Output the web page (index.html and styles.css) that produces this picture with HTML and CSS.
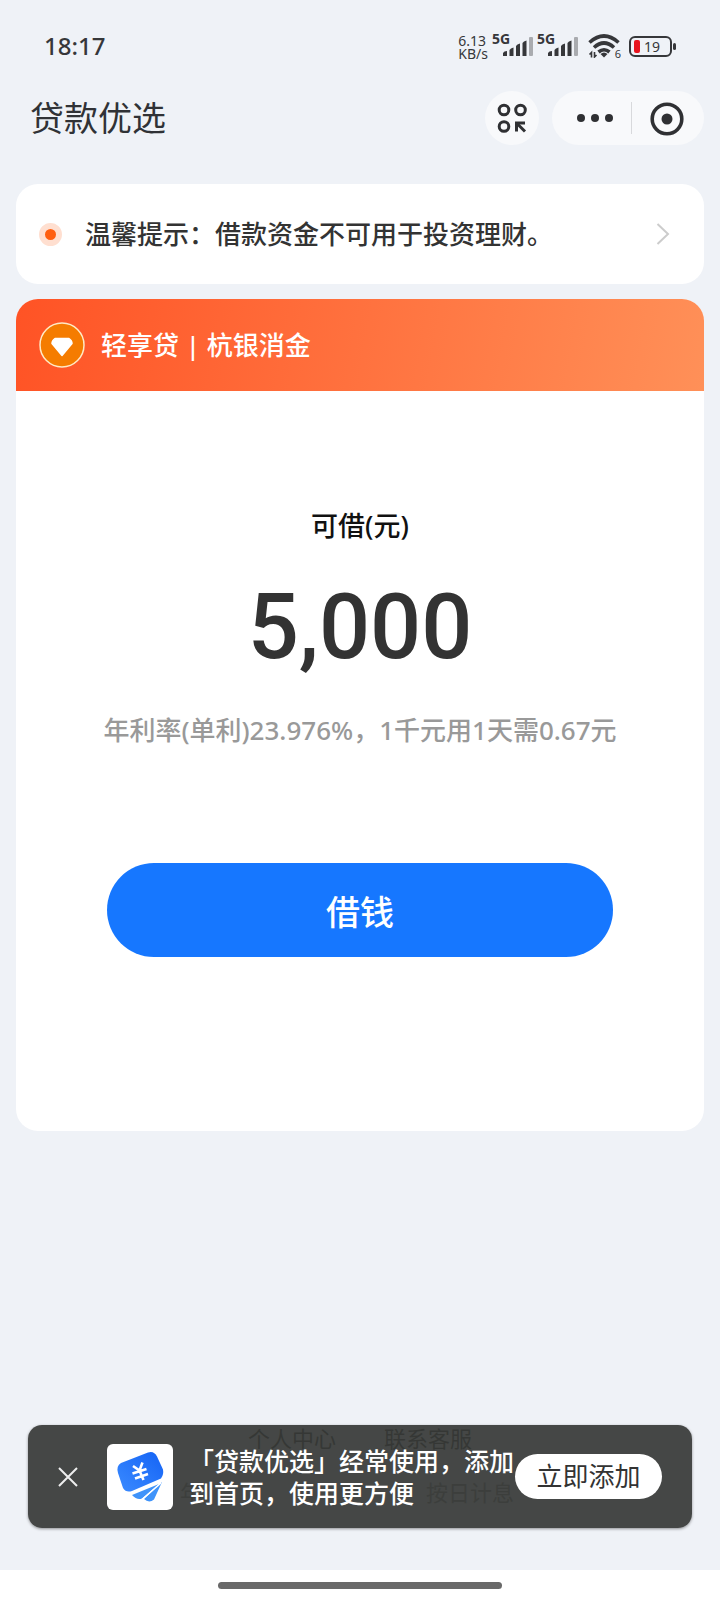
FILE: index.html
```html
<!DOCTYPE html>
<html lang="zh-CN">
<head>
<meta charset="utf-8">
<meta name="viewport" content="width=device-width, initial-scale=1">
<title>贷款优选</title>
<link rel="stylesheet" href="styles.css">
</head>
<body>
<div class="screen">
  <div class="status">
    <span class="time">18:17</span>
    <div class="indicators">
      <span class="speed"><span>6.13</span><span>KB/s</span></span>
      <span class="signal"><span class="net">5G</span>
        <svg class="bars" width="30" height="20" viewBox="0 0 30 20"><g fill="#36373a"><path d="M0 19v-3q1-2 4-2v5z"/><path d="M6.500 19v-6q1-2 4-2.500V19z"/><path d="M13 19V9q1-2 4-2.500V19z"/><path d="M19.500 19V6q1-2 4-2.500V19z"/></g><rect x="26" y="0" width="4" height="19" rx="1" fill="#a9abaf"/></svg>
      </span>
      <span class="signal"><span class="net">5G</span>
        <svg class="bars" width="30" height="20" viewBox="0 0 30 20"><g fill="#36373a"><path d="M0 19v-3q1-2 4-2v5z"/><path d="M6.500 19v-6q1-2 4-2.500V19z"/><path d="M13 19V9q1-2 4-2.500V19z"/><path d="M19.500 19V6q1-2 4-2.500V19z"/></g><rect x="26" y="0" width="4" height="19" rx="1" fill="#a9abaf"/></svg>
      </span>
      <span class="wifi">
        <svg width="32" height="24" viewBox="0 0 32 24" fill="none" stroke="#36373a" stroke-width="3.600"><path d="M1.500 8.500Q16-4.500 30.500 8.500M6 13.500Q16 4.500 26 13.500M10.500 18q5.500-4.500 11 0"/><path d="M12.500 20q3.500-3 7 0L16 23.500z" fill="#36373a" stroke="none"/><path d="M3.500 23.500v-5L1.500 20.500M6.500 18v5l2-2" stroke-width="1.600"/></svg>
        <span class="gen">6</span>
      </span>
      <span class="battery"><span class="level"></span>19</span>
    </div>
  </div>

  <header class="nav">
    <h1 class="title">贷款优选</h1>
    <button class="round" aria-label="更多服务">
      <svg width="30" height="30" viewBox="0 0 30 30" fill="none" stroke="#2f3033" stroke-width="3"><circle cx="7" cy="7" r="4.800"/><circle cx="23.500" cy="7" r="4.800"/><circle cx="7" cy="23.500" r="4.800"/><path d="M28 28.500 20 20.500"/><path d="M19.500 28.500V20H28" stroke-width="3"/></svg>
    </button>
    <div class="capsule">
      <button class="cap menu" aria-label="菜单"><svg width="36" height="8" viewBox="0 0 36 8" fill="#2f3033"><circle cx="4" cy="4" r="4"/><circle cx="18" cy="4" r="4"/><circle cx="32" cy="4" r="4"/></svg></button>
      <button class="cap" aria-label="关闭"><svg width="34" height="34" viewBox="0 0 34 34"><circle cx="17" cy="17" r="14.800" fill="none" stroke="#2f3033" stroke-width="3.600"/><circle cx="17" cy="17" r="5.500" fill="#2f3033"/></svg></button>
    </div>
  </header>

  <main class="content">
    <a class="notice" href="#">
      <span class="dot"></span>
      <span class="notice-text">温馨提示：借款资金不可用于投资理财。</span>
      <svg width="14" height="22" viewBox="0 0 14 22" fill="none" stroke="#ccc" stroke-width="2"><path d="M1.500 1 12 11 1.500 21"/></svg>
    </a>
    <section class="card">
      <div class="card-head">
        <svg width="46" height="46" viewBox="0 0 46 46"><circle cx="23" cy="23" r="22" fill="#f57c00" stroke="#ffe9c4" stroke-width="1.500"/><path d="M16 16.500h14q3 2 3 5L23 33.500 13 21.500q0-3 3-5z" fill="#fff" stroke="#fff" stroke-width="1.500" stroke-linejoin="round"/></svg>
        <h2 class="brand">轻享贷 | 杭银消金</h2>
      </div>
      <div class="card-body">
        <p class="label">可借(元)</p>
        <p class="amount">5,000</p>
        <p class="rate">年利率(单利)23.976%，1千元用1天需0.67元</p>
        <button class="borrow">借钱</button>
      </div>
    </section>
  </main>

  <footer class="footer">
    <div class="links"><a href="#">个人中心</a><a href="#">联系客服</a></div>
    <p class="legal"><span>年</span><span>按日计息</span></p>
  </footer>

  <aside class="toast">
    <button class="close" aria-label="关闭提示"><svg width="20" height="20" viewBox="0 0 20 20" fill="none" stroke="#eee" stroke-width="2"><path d="m1 1 18 18M19 1 1 19"/></svg></button>
    <svg class="app" width="66" height="66" viewBox="0 0 66 66">
      <defs><linearGradient id="blue" x1="0" y1="1" x2="1" y2="0"><stop offset="0" stop-color="#3b8bff"/><stop offset="1" stop-color="#1463f5"/></linearGradient></defs>
      <rect width="66" height="66" rx="6" fill="#fff"/>
      <path d="M14 19 41 8.500q6-2 9 4l6 13q1 5-2 9L25 47q-6 2-9-3l-5-15q-2-7 3-10z" fill="url(#blue)"/>
      <path d="m25 51 27-11-17 14.500q-5 2-10-3.500zM37 55l18-17-8 17.500q-5 4-10-.5z" fill="#3f93fa"/>
      <path d="M54 39 35 55.500" stroke="#fff" stroke-width="1.500"/>
      <path d="m26 22 6.500 4.500 3-8M32.500 26.500l4 9.500M25.500 29.500l14-4.500M28 34.500l13-4.500" fill="none" stroke="#fff" stroke-width="2.600"/>
    </svg>
    <p class="toast-text">「贷款优选」经常使用，添加到首页，使用更方便</p>
    <button class="add">立即添加</button>
  </aside>

  <div class="homebar"><span class="pill"></span></div>
</div>
</body>
</html>
```
FILE: styles.css
```css
* { box-sizing: border-box; }
body, h1, h2, p { margin: 0; }
body {
  background: #eff2f7;
  color: #333;
  font-family: "Noto Sans", "Noto Sans CJK SC", sans-serif;
}
button { border: 0; padding: 0; font: inherit; color: inherit; cursor: pointer; }
a { color: inherit; text-decoration: none; }
svg { display: block; flex: none; }
.screen { position: relative; min-height: 100vh; display: flex; flex-direction: column; }

.status { display: flex; justify-content: space-between; height: 76px; padding: 16px 48px 0 44px; }
.time { font-size: 24px; font-weight: 500; line-height: 60px; color: #36373a; }
.indicators { display: flex; align-items: flex-start; gap: 4px; padding-top: 16px; color: #36373a; }
.speed { display: flex; flex-direction: column; font-size: 14px; line-height: 13px; padding-top: 2px; }
.signal { display: flex; width: 41px; position: relative; padding: 5px 0 0 11px; }
.net { position: absolute; left: 0; top: 0; font-size: 14px; line-height: 14px; font-weight: 700; }
.wifi { position: relative; margin: 2px 5px 0 6px; }
.gen { position: absolute; right: -1px; bottom: -2px; padding-left: 1px; font-size: 11px; line-height: 12px; background: #eff2f7; }
.battery { position: relative; display: flex; align-items: center; gap: 4px; width: 43px; height: 21px; margin-top: 4px; padding-left: 3px; border: 2px solid #36373a; border-radius: 6px; font-size: 14px; line-height: 16px; }
.battery::after { content: ""; position: absolute; right: -6px; top: 5px; width: 3px; height: 7px; border-radius: 2px; background: #36373a; }
.level { width: 6px; height: 13px; border-radius: 2px; background: #e8141e; }

.nav { display: flex; align-items: center; height: 84px; padding: 0 16px 0 30px; }
.title { flex: 1; font-size: 34px; line-height: 48px; font-weight: 400; color: #303236; }
.round { display: grid; place-items: center; width: 54px; height: 54px; border-radius: 50%; background: #f8f9fb; }
.capsule { display: flex; align-items: center; width: 152px; height: 54px; margin-left: 13px; border-radius: 27px; background: #f8f9fb; }
.cap { flex: 1; display: grid; place-items: center; height: 32px; background: none; }
.menu { border-right: 1px solid #d8d9dc; padding-left: 8px; }
.capsule .cap + .cap { padding-right: 2px; }

.content { display: flex; flex-direction: column; gap: 15px; padding: 24px 16px 0; }
.notice { display: flex; align-items: center; height: 100px; padding: 0 34px 0 23px; border-radius: 22px; background: #fff; }
.dot { width: 23px; height: 23px; border: 6px solid #ffdfd0; border-radius: 50%; background: #ff5f10; }
.notice-text { flex: 1; margin-left: 23px; font-size: 26px; font-weight: 500; line-height: 40px; }
.card { border-radius: 22px; background: #fff; overflow: hidden; }
.card-head { display: flex; align-items: center; gap: 16px; height: 92px; padding: 0 23px; background: linear-gradient(100deg, #ff5325, #ff9058); }
.brand { font-size: 26px; font-weight: 500; line-height: 40px; color: #fff; }
.card-body { display: flex; flex-direction: column; align-items: center; padding: 115px 24px 174px; text-align: center; }
.label { font-size: 27px; font-weight: 500; line-height: 40px; color: #111; }
.amount { margin-top: 28px; font-family: Roboto, sans-serif; font-size: 90px; font-weight: 500; line-height: 108px; }
.rate { margin-top: 28px; font-size: 26px; line-height: 40px; font-weight: 500; color: #999; }
.borrow { width: 79%; height: 94px; margin-top: 113px; border-radius: 47px; background: #1677ff; color: #fff; font-size: 34px; font-weight: 500; }

.footer { margin-top: auto; padding-bottom: 62px; color: #555; font-size: 22px; line-height: 32px; }
.links { display: flex; justify-content: center; gap: 48px; }
.legal { display: flex; justify-content: center; gap: 224px; margin-top: 22px; padding-right: 26px; color: #999; }
.toast { position: absolute; left: 28px; right: 28px; bottom: 72px; display: flex; align-items: center; height: 103px; padding: 0 30px; border-radius: 14px; background: rgba(50, 52, 50, 0.9); color: #fff; box-shadow: 0 1px 3px rgba(0, 0, 0, 0.4); }
.close { background: none; }
.app { margin-left: 29px; }
.toast-text { flex: 1; margin-left: 16px; font-size: 25px; font-weight: 500; line-height: 32px; }
.add { width: 147px; height: 45px; border-radius: 23px; background: #fff; color: #333; font-size: 26px; line-height: 45px; }

.homebar { display: grid; place-items: center; height: 30px; background: #fff; }
.pill { width: 284px; height: 7px; border-radius: 4px; background: #696969; }
```
